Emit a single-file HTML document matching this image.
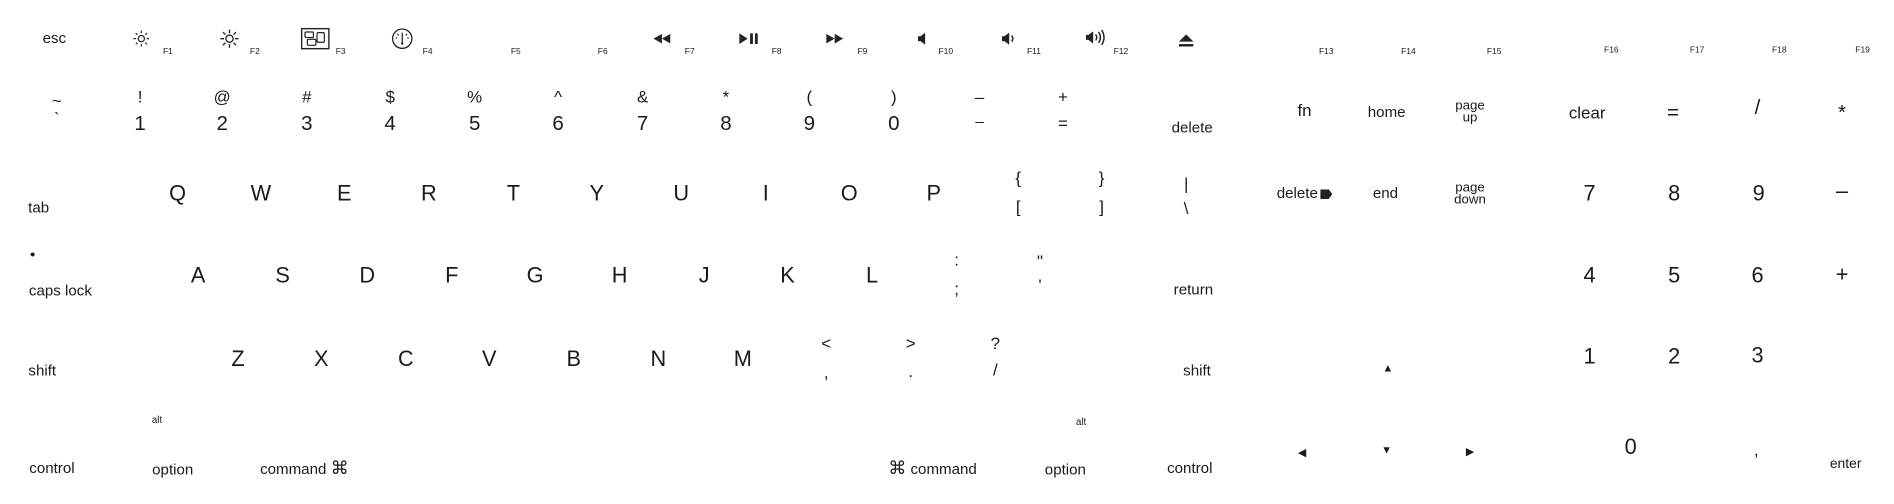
<!DOCTYPE html>
<html><head><meta charset="utf-8"><style>
html,body{margin:0;padding:0;background:#fff;}
body{width:1894px;height:504px;overflow:hidden;position:relative;}
#k{position:absolute;left:0;top:0;width:1568px;height:417px;transform:scale(1.2079);transform-origin:0 0;font-family:"Liberation Sans","DejaVu Sans",sans-serif;color:#1a1a1a;}
#k span,#k svg{position:absolute;transform:translate(-50%,-50%);white-space:nowrap;line-height:1;}
.s{font-size:12.5px;}
.f{font-size:7px;}
.L{font-size:18px;}
.n{font-size:17px;}
.t{font-size:14px;}
.pg{font-size:11px;text-align:center;line-height:0.95 !important;}
</style></head><body><div id="k">
<span class="s" style="left:45px;top:32px">esc</span>
<svg style="left:117px;top:32px" width="14" height="14" viewBox="0 0 14 14"><circle cx="7" cy="7" r="2.6" fill="none" stroke="#222" stroke-width="1"/><g stroke="#222" stroke-width="1"><path d="M7 0.5v2M7 11.5v2M0.5 7h2M11.5 7h2M2.4 2.4l1.3 1.3M10.3 10.3l1.3 1.3M2.4 11.6l1.3-1.3M10.3 3.7l1.3-1.3"/></g></svg>
<span class="f" style="left:139px;top:43px">F1</span>
<svg style="left:190px;top:32px" width="16" height="16" viewBox="0 0 16 16"><circle cx="8" cy="8" r="3" fill="none" stroke="#222" stroke-width="1.1"/><g stroke="#222" stroke-width="1.1"><path d="M8 0.5v3M8 12.5v3M0.5 8h3M12.5 8h3M2.6 2.6l2 2M11.4 11.4l2 2M2.6 13.4l2-2M11.4 4.6l2-2"/></g></svg>
<span class="f" style="left:211px;top:43px">F2</span>
<svg style="left:261px;top:32px" width="24" height="18" viewBox="0 0 24 18"><rect x="0.7" y="0.7" width="22.6" height="16.6" fill="none" stroke="#222" stroke-width="1.2"/><rect x="3.5" y="3.5" width="7" height="4.5" rx="1" fill="none" stroke="#222"/><rect x="5.5" y="9.5" width="7" height="5" rx="1" fill="none" stroke="#222"/><rect x="13.5" y="4" width="6" height="8" rx="1" fill="none" stroke="#222"/></svg>
<span class="f" style="left:282px;top:43px">F3</span>
<svg style="left:333px;top:32px" width="18" height="18" viewBox="0 0 18 18"><circle cx="9" cy="9" r="8" fill="none" stroke="#222" stroke-width="1.1"/><path d="M9 4v9M5 5l1 1.3M13 5l-1 1.3M3.5 8.5h1.3M13.2 8.5h1.3" stroke="#222"/><circle cx="9" cy="13" r="1" fill="#222"/></svg>
<span class="f" style="left:354px;top:43px">F4</span>
<span class="f" style="left:427px;top:43px">F5</span>
<span class="f" style="left:499px;top:43px">F6</span>
<svg style="left:548px;top:32px" width="14" height="8" viewBox="0 0 14 8"><path d="M7 0L0 4L7 8ZM14 0L7 4L14 8Z" fill="#222"/></svg>
<span class="f" style="left:571px;top:43px">F7</span>
<svg style="left:620px;top:32px" width="16" height="9" viewBox="0 0 16 9"><path d="M0 0L7 4.5L0 9Z" fill="#222"/><rect x="9" y="0" width="2.3" height="9" fill="#222"/><rect x="13" y="0" width="2.3" height="9" fill="#222"/></svg>
<span class="f" style="left:643px;top:43px">F8</span>
<svg style="left:691px;top:32px" width="14" height="8" viewBox="0 0 14 8"><path d="M0 0L7 4L0 8ZM7 0L14 4L7 8Z" fill="#222"/></svg>
<span class="f" style="left:714px;top:43px">F9</span>
<svg style="left:763px;top:32px" width="6" height="10" viewBox="0 0 6 10"><path d="M0 3h2l4-3v10l-4-3h-2z" fill="#222"/></svg>
<span class="f" style="left:783px;top:43px">F10</span>
<svg style="left:835px;top:32px" width="11" height="10" viewBox="0 0 11 10"><path d="M0 3h2l4-3v10l-4-3h-2z" fill="#222"/><path d="M8 2.5q2 2.5 0 5" fill="none" stroke="#222" stroke-width="1.2"/></svg>
<span class="f" style="left:856px;top:43px">F11</span>
<svg style="left:907px;top:31px" width="16" height="14" viewBox="0 0 16 14"><path d="M0 5h2l4-3v10l-4-3h-2z" fill="#222"/><path d="M8 4.5q2 2.5 0 5M10.5 2.5q3 4.5 0 9M13 0.8q4 6.2 0 12.4" fill="none" stroke="#222" stroke-width="1.2"/></svg>
<span class="f" style="left:928px;top:43px">F12</span>
<svg style="left:982px;top:34px" width="12" height="11" viewBox="0 0 12 11"><path d="M6 0L12 6H0Z" fill="#222"/><rect x="0" y="8" width="12" height="2" fill="#222"/></svg>
<span class="f" style="left:1098px;top:43px">F13</span>
<span class="f" style="left:1166px;top:43px">F14</span>
<span class="f" style="left:1237px;top:43px">F15</span>
<span class="f" style="left:1334px;top:42px">F16</span>
<span class="f" style="left:1405px;top:42px">F17</span>
<span class="f" style="left:1473px;top:42px">F18</span>
<span class="f" style="left:1542px;top:42px">F19</span>

<span class="t" style="left:47px;top:83px">~</span><span class="t" style="left:47px;top:98px">`</span>
<span class="t" style="left:116px;top:80px">!</span><span class="n" style="left:116px;top:102px">1</span>
<span class="t" style="left:184px;top:80px">@</span><span class="n" style="left:184px;top:102px">2</span>
<span class="t" style="left:254px;top:80px">#</span><span class="n" style="left:254px;top:102px">3</span>
<span class="t" style="left:323px;top:80px">$</span><span class="n" style="left:323px;top:102px">4</span>
<span class="t" style="left:393px;top:80px">%</span><span class="n" style="left:393px;top:102px">5</span>
<span class="t" style="left:462px;top:80px">^</span><span class="n" style="left:462px;top:102px">6</span>
<span class="t" style="left:532px;top:80px">&amp;</span><span class="n" style="left:532px;top:102px">7</span>
<span class="t" style="left:601px;top:80px">*</span><span class="n" style="left:601px;top:102px">8</span>
<span class="t" style="left:670px;top:80px">(</span><span class="n" style="left:670px;top:102px">9</span>
<span class="t" style="left:740px;top:80px">)</span><span class="n" style="left:740px;top:102px">0</span>
<span class="t" style="left:811px;top:80px">–</span><span class="s" style="left:811px;top:101px">–</span>
<span class="t" style="left:880px;top:80px">+</span><span class="t" style="left:880px;top:102px">=</span>
<span class="s" style="left:987px;top:106px">delete</span>
<span class="t" style="left:1080px;top:91px">fn</span>
<span class="s" style="left:1148px;top:93px">home</span>
<span class="pg" style="left:1217px;top:93px">page<br>up</span>
<span class="t" style="left:1314px;top:93px">clear</span>
<span class="n" style="left:1385px;top:93px">=</span>
<span class="n" style="left:1455px;top:89px">/</span>
<span class="n" style="left:1525px;top:93px">*</span>

<span class="s" style="left:32px;top:172px">tab</span>
<span class="L" style="left:147px;top:160px">Q</span><span class="L" style="left:216px;top:160px">W</span><span class="L" style="left:285px;top:160px">E</span><span class="L" style="left:355px;top:160px">R</span><span class="L" style="left:425px;top:160px">T</span><span class="L" style="left:494px;top:160px">Y</span><span class="L" style="left:564px;top:160px">U</span><span class="L" style="left:634px;top:160px">I</span><span class="L" style="left:703px;top:160px">O</span><span class="L" style="left:773px;top:160px">P</span>
<span class="t" style="left:843px;top:147px">{</span><span class="t" style="left:843px;top:171px">[</span>
<span class="t" style="left:912px;top:147px">}</span><span class="t" style="left:912px;top:171px">]</span>
<span class="t" style="left:982px;top:152px">|</span><span class="t" style="left:982px;top:172px">\</span>
<span class="s" style="left:1080px;top:160px">delete<b style="display:inline-block;width:10px;height:8px;background:#222;margin-left:2px;clip-path:polygon(0 0,70% 0,100% 50%,70% 100%,0 100%);vertical-align:-1px"></b></span>
<span class="s" style="left:1147px;top:160px">end</span>
<span class="pg" style="left:1217px;top:161px">page<br>down</span>
<span class="L" style="left:1316px;top:160px">7</span><span class="L" style="left:1386px;top:160px">8</span><span class="L" style="left:1456px;top:160px">9</span><span class="L" style="left:1525px;top:158px">–</span>

<span class="s" style="left:27px;top:211px">•</span>
<span class="s" style="left:50px;top:241px">caps lock</span>
<span class="L" style="left:164px;top:228px">A</span><span class="L" style="left:234px;top:228px">S</span><span class="L" style="left:304px;top:228px">D</span><span class="L" style="left:374px;top:228px">F</span><span class="L" style="left:443px;top:228px">G</span><span class="L" style="left:513px;top:228px">H</span><span class="L" style="left:583px;top:228px">J</span><span class="L" style="left:652px;top:228px">K</span><span class="L" style="left:722px;top:228px">L</span>
<span class="t" style="left:792px;top:215px">:</span><span class="t" style="left:792px;top:239px">;</span>
<span class="t" style="left:861px;top:216px">"</span><span class="t" style="left:861px;top:236px">'</span>
<span class="s" style="left:988px;top:240px">return</span>
<span class="L" style="left:1316px;top:228px">4</span><span class="L" style="left:1386px;top:228px">5</span><span class="L" style="left:1455px;top:228px">6</span><span class="L" style="left:1525px;top:227px">+</span>

<span class="s" style="left:35px;top:307px">shift</span>
<span class="L" style="left:197px;top:297px">Z</span><span class="L" style="left:266px;top:297px">X</span><span class="L" style="left:336px;top:297px">C</span><span class="L" style="left:405px;top:297px">V</span><span class="L" style="left:475px;top:297px">B</span><span class="L" style="left:545px;top:297px">N</span><span class="L" style="left:615px;top:297px">M</span>
<span class="t" style="left:684px;top:284px">&lt;</span><span class="t" style="left:684px;top:308px">,</span>
<span class="t" style="left:754px;top:284px">&gt;</span><span class="t" style="left:754px;top:307px">.</span>
<span class="t" style="left:824px;top:284px">?</span><span class="t" style="left:824px;top:306px">/</span>
<span class="s" style="left:991px;top:307px">shift</span>
<span class="f" style="left:1149px;top:305px;font-size:9px">▲</span>
<span class="L" style="left:1316px;top:295px">1</span><span class="L" style="left:1386px;top:295px">2</span><span class="L" style="left:1455px;top:294px">3</span>

<span class="f" style="left:130px;top:348px;font-size:8px">alt</span>
<span class="s" style="left:43px;top:388px">control</span>
<span class="s" style="left:143px;top:389px">option</span>
<span class="s" style="left:252px;top:388px">command <span style="position:static;transform:none;font-size:15px">⌘</span></span>
<span class="s" style="left:772px;top:388px"><span style="position:static;transform:none;font-size:15px">⌘</span> command</span>
<span class="f" style="left:895px;top:350px;font-size:8px">alt</span>
<span class="s" style="left:882px;top:389px">option</span>
<span class="s" style="left:985px;top:388px">control</span>
<span class="f" style="left:1078px;top:375px;font-size:9px">◀</span>
<span class="f" style="left:1148px;top:373px;font-size:9px">▼</span>
<span class="f" style="left:1217px;top:374px;font-size:9px">▶</span>
<span class="L" style="left:1350px;top:370px">0</span>
<span class="t" style="left:1454px;top:372px">,</span>
<span class="s" style="left:1528px;top:385px;font-size:11.5px">enter</span>
</div></body></html>
